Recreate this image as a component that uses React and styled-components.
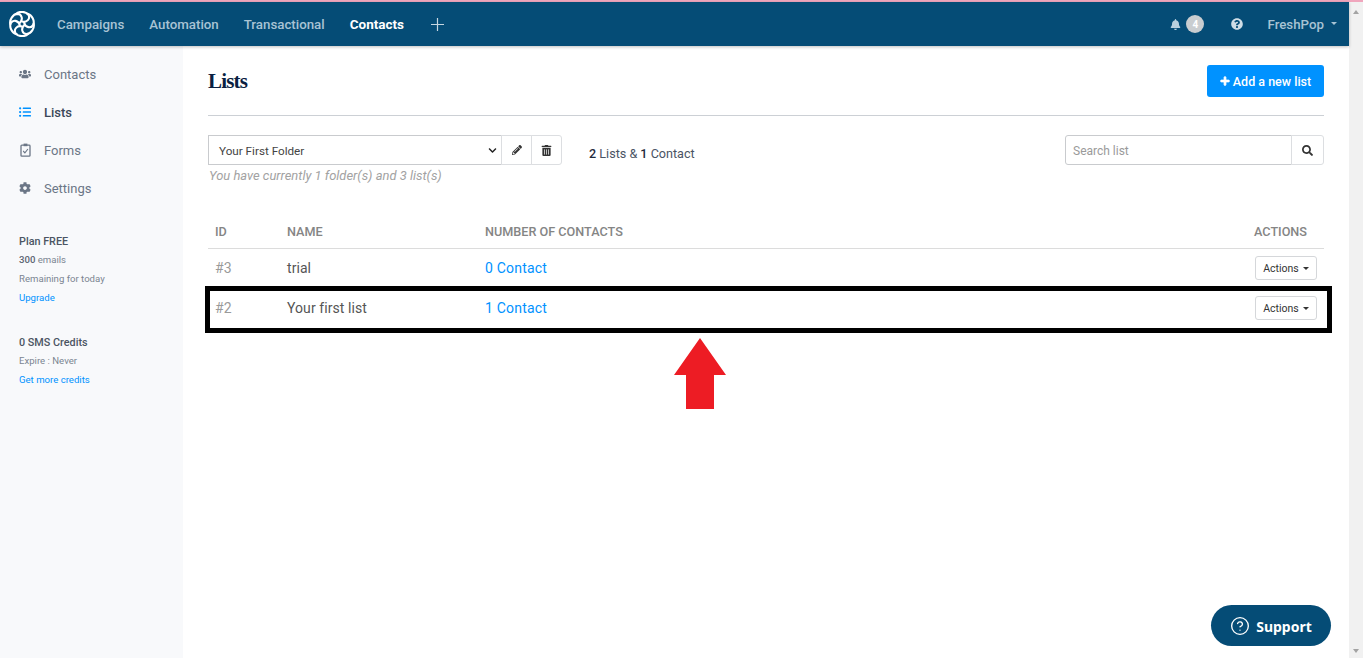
import React from "react";
import styled, { createGlobalStyle } from "styled-components";
import { FaUsers, FaListUl, FaCog, FaBell, FaQuestionCircle, FaPencilAlt, FaTrashAlt, FaSearch, FaPlus, FaChevronDown } from "react-icons/fa";
import { CircleHelp } from "lucide-react";

const Global = createGlobalStyle`
  html, body { margin: 0; padding: 0; height: 100%; overflow: hidden; background: #fff; }
  body { font-family: Roboto, "Liberation Sans", sans-serif; color: #333; }
  * { box-sizing: border-box; }
`;

const Page = styled.div`position: relative; width: 1363px; height: 658px; overflow: hidden; display: flex; flex-direction: column;`;
const PinkStrip = styled.div`height: 2px; background: #f0a6bd; flex: none;`;
const Body = styled.div`flex: 1; display: flex; min-height: 0;`;
const Viewport = styled.div`flex: 1; display: flex; flex-direction: column; min-width: 0;`;
const Scrollbar = styled.div`width: 14px; background: #f1f1f1; display: flex; flex-direction: column; justify-content: space-between; align-items: center; padding: 8px 0 5px;`;
const ScrollArrow = styled.div`
  width: 0; height: 0; border-left: 3.5px solid transparent; border-right: 3.5px solid transparent;
  ${p => p.$down ? "border-top: 4px solid #a3a3a3;" : "border-bottom: 4px solid #a3a3a3;"}
`;

const Header = styled.header`height: 44px; flex: none; background: #054c76; display: flex; align-items: center; padding: 0 12px 0 9px; box-shadow: 0 1px 3px rgba(0,0,0,.25); position: relative; z-index: 1;`;
const Logo = styled.svg`width: 26px; height: 26px; flex: none; margin-right: 22px;`;
const Nav = styled.nav`display: flex; align-items: center; gap: 25px; flex: 1;`;
const NavItem = styled.a`font-size: ${p => p.$active ? "13.5px" : "13.3px"}; font-weight: ${p => p.$active ? 700 : 500}; color: ${p => p.$active ? "#fff" : "#a8c3d4"};`;
const PlusIcon = styled.svg`width: 13px; height: 13px; margin-left: 2px;`;
const HeaderRight = styled.div`display: flex; align-items: center; color: #b9cfdd;`;
const Badge = styled.span`width: 18px; height: 18px; border-radius: 50%; background: #c9cdd0; color: #fff; font-size: 10px; font-weight: 700; display: flex; align-items: center; justify-content: center; margin-left: 5px;`;
const HelpWrap = styled.span`display: flex; margin: 0 24px 0 27px; font-size: 12px; color: #cfdde6;`;
const User = styled.span`font-size: 13.3px; font-weight: 500; color: #a8c3d4; display: flex; align-items: center; gap: 7px;`;
const SmallCaret = styled.span`width: 0; height: 0; border-left: 3px solid transparent; border-right: 3px solid transparent; border-top: 3px solid currentColor; margin-bottom: 2px;`;

const Content = styled.div`flex: 1; display: flex; min-height: 0;`;
const Sidebar = styled.aside`width: 183px; flex: none; background: #f8f9fb; padding: 9px 0 0 19px;`;
const SideItem = styled.div`height: 38px; display: flex; align-items: center; gap: 13px; font-size: 13px; font-weight: ${p => p.$active ? 500 : 400}; color: ${p => p.$active ? "#3b4758" : "#6b7686"};`;
const SideIcon = styled.span`width: 12px; display: flex; justify-content: center; font-size: 12px; color: ${p => p.$active ? "#0092ff" : "#6b7686"};`;
const Info = styled.div`margin-top: ${p => p.$second ? "26px" : "25px"}; display: flex; flex-direction: column;`;
const InfoTitle = styled.div`font-size: 10.8px; font-weight: 500; padding-top: 2px; line-height: 16px; color: #4b5563;`;
const InfoLine = styled.div`font-size: 9.6px; line-height: 19px; color: #7b8592; b { font-weight: 500; color: #5b6572; }`;
const InfoLink = styled.a`font-size: 9.6px; line-height: 19px; color: #0092ff;`;

const Main = styled.main`flex: 1; padding: 19px 25px 0; min-width: 0;`;
const TitleRow = styled.div`height: 51px; display: flex; align-items: flex-start; justify-content: space-between; border-bottom: 1px solid #ccd0d5;`;
const Title = styled.h1`margin: 0; padding-top: 4px; font-family: "Liberation Serif", serif; font-size: 21px; line-height: 24px; font-weight: 700; color: #0b1f42; letter-spacing: -.8px;`;
const PrimaryButton = styled.button`width: 117px; height: 32px; border: 0; border-radius: 3px; background: #0092ff; color: #fff; font: 500 12.5px Roboto, sans-serif; display: flex; align-items: center; justify-content: center; gap: 3px; padding: 0;`;
const ThickPlus = styled(FaPlus)`stroke: currentColor; stroke-width: 40px;`;

const Toolbar = styled.div`display: flex; align-items: flex-start; margin-top: 19px;`;
const FolderBlock = styled.div`width: 354px;`;
const InputGroup = styled.div`display: flex; height: 30px;`;
const FolderSelect = styled.div`flex: 1; border: 1px solid #c9cbce; display: flex; align-items: center; justify-content: space-between; padding: 1px 4px 0 10px; font-size: 11.7px; color: #444;`;
const AddonButton = styled.div`width: ${p => p.$wide ? "33px" : "31px"}; margin-left: -1px; border: 1px solid #dcdee1; display: flex; align-items: center; justify-content: center; font-size: 11px; color: #333; ${p => p.$end && "border-radius: 0 3px 3px 0;"} background: #fff;`;
const Hint = styled.div`font-size: 12.95px; font-style: italic; color: #a2a2a2; margin-top: 3px; padding-left: 1px; line-height: 15px;`;
const Counts = styled.div`margin: 11px 0 0 27px; font-size: 12.6px; line-height: 15px; color: #4a5464; flex: 1; b { font-weight: 500; color: #1f2b3d; }`;
const SearchInput = styled.div`width: 227px; height: 30px; border: 1px solid #c9cbce; border-radius: 3px 0 0 3px; padding: 1px 0 0 7px; display: flex; align-items: center; font-size: 12px; color: #9a9a9a;`;

const Table = styled.table`width: 100%; border-collapse: collapse; margin-top: 32px; table-layout: fixed;`;
const Th = styled.th`height: 33px; padding: 0 ${p => p.$right ? "17px" : "7px"} 0 7px; text-align: ${p => p.$right ? "right" : "left"}; font-size: 12.65px; font-weight: 500; color: #858585; border-bottom: 1px solid #dcdcdc; ${p => p.$w && `width: ${p.$w}px;`}`;
const Td = styled.td`height: 40px; padding: 0 7px; font-size: 14px; color: ${p => p.$muted ? "#9a9a9a" : "#555"}; text-align: ${p => p.$right ? "right" : "left"}; letter-spacing: .07px;`;
const ContactLink = styled.a`color: #0092ff; letter-spacing: .2px;`;
const ActionsButton = styled.button`height: 24px; width: 62px; padding: 0; border: 1px solid #d5d7da; border-radius: 3px; background: #fff; font: 400 10.5px Roboto, sans-serif; color: #333; display: inline-flex; align-items: center; justify-content: center; gap: 4px; vertical-align: middle;`;
const Caret = styled.span`width: 0; height: 0; border-left: 3.5px solid transparent; border-right: 3.5px solid transparent; border-top: 3.5px solid #333;`;

const HighlightBox = styled.div`position: absolute; left: 205px; top: 286px; width: 1127px; height: 47px; border: 5px solid #000; pointer-events: none;`;
const ArrowSvg = styled.svg`position: absolute; left: 674px; top: 338px; width: 52px; height: 71px;`;
const Support = styled.button`position: absolute; left: 1211px; top: 605px; width: 120px; height: 41px; border: 0; border-radius: 21px; background: #054c76; color: #fff; display: flex; align-items: center; justify-content: center; gap: 6px; font: 700 14px "Noto Sans", sans-serif; padding: 1px 0 0;`;

const SwirlLogo = () => (
  <Logo viewBox="-13 -13 26 26" fill="none" stroke="#fff" strokeWidth="2.1" strokeLinecap="round">
    {[0, 60, 120, 180, 240, 300].map(a => (
      <g key={a} transform={`rotate(${a})`}>
        <path d="M-6 -10 C-3 -13 4 -13 6.5 -9 C8.5 -5.5 5 -1 0 -2.5" />
      </g>
    ))}
  </Logo>
);

const ClipboardIcon = () => (
  <svg width="11" height="14" viewBox="0 0 11 14" fill="none" stroke="#6b7686" strokeWidth="1.3">
    <rect x="1" y="2.2" width="9" height="11" rx=".8" />
    <rect x="3.6" y=".6" width="3.8" height="2.6" fill="#6b7686" stroke="none" />
    <path d="M3.2 8 L4.9 9.8 L7.9 6" strokeWidth="1.1" />
  </svg>
);

export default function App() {
  return (
    <Page>
      <Global />
      <PinkStrip />
      <Body>
        <Viewport>
          <Header>
            <SwirlLogo />
            <Nav>
              <NavItem>Campaigns</NavItem>
              <NavItem>Automation</NavItem>
              <NavItem>Transactional</NavItem>
              <NavItem $active>Contacts</NavItem>
              <PlusIcon viewBox="0 0 13 13" stroke="#c6d6e1" strokeWidth="1.2"><path d="M6.5 0V13M0 6.5H13" /></PlusIcon>
            </Nav>
            <HeaderRight>
              <FaBell size={11} />
              <Badge>4</Badge>
              <HelpWrap><FaQuestionCircle /></HelpWrap>
              <User>FreshPop <SmallCaret /></User>
            </HeaderRight>
          </Header>
          <Content>
            <Sidebar>
              <SideItem><SideIcon><FaUsers /></SideIcon>Contacts</SideItem>
              <SideItem $active><SideIcon $active><FaListUl /></SideIcon>Lists</SideItem>
              <SideItem><SideIcon><ClipboardIcon /></SideIcon>Forms</SideItem>
              <SideItem><SideIcon><FaCog /></SideIcon>Settings</SideItem>
              <Info>
                <InfoTitle>Plan FREE</InfoTitle>
                <InfoLine><b>300</b> emails</InfoLine>
                <InfoLine>Remaining for today</InfoLine>
                <InfoLink>Upgrade</InfoLink>
              </Info>
              <Info $second>
                <InfoTitle>0 SMS Credits</InfoTitle>
                <InfoLine>Expire : Never</InfoLine>
                <InfoLink>Get more credits</InfoLink>
              </Info>
            </Sidebar>
            <Main>
              <TitleRow>
                <Title>Lists</Title>
                <PrimaryButton><ThickPlus size={10} /> Add a new list</PrimaryButton>
              </TitleRow>
              <Toolbar>
                <FolderBlock>
                  <InputGroup>
                    <FolderSelect>Your First Folder <FaChevronDown size={9} color="#222" /></FolderSelect>
                    <AddonButton><FaPencilAlt size={10} /></AddonButton>
                    <AddonButton $end><FaTrashAlt /></AddonButton>
                  </InputGroup>
                  <Hint>You have currently 1 folder(s) and 3 list(s)</Hint>
                </FolderBlock>
                <Counts><b>2</b> Lists &amp; <b>1</b> Contact</Counts>
                <InputGroup>
                  <SearchInput>Search list</SearchInput>
                  <AddonButton $end $wide><FaSearch /></AddonButton>
                </InputGroup>
              </Toolbar>
              <Table>
                <thead>
                  <tr>
                    <Th $w={72}>ID</Th>
                    <Th $w={198}>NAME</Th>
                    <Th>NUMBER OF CONTACTS</Th>
                    <Th $w={120} $right>ACTIONS</Th>
                  </tr>
                </thead>
                <tbody>
                  <tr>
                    <Td $muted>#3</Td>
                    <Td>trial</Td>
                    <Td><ContactLink>0 Contact</ContactLink></Td>
                    <Td $right><ActionsButton>Actions <Caret /></ActionsButton></Td>
                  </tr>
                  <tr>
                    <Td $muted>#2</Td>
                    <Td>Your first list</Td>
                    <Td><ContactLink>1 Contact</ContactLink></Td>
                    <Td $right><ActionsButton>Actions <Caret /></ActionsButton></Td>
                  </tr>
                </tbody>
              </Table>
            </Main>
          </Content>
        </Viewport>
        <Scrollbar>
          <ScrollArrow />
          <ScrollArrow $down />
        </Scrollbar>
      </Body>
      <HighlightBox />
      <ArrowSvg viewBox="0 0 52 71">
        <path d="M26 0 L52 37 L40 37 L40 71 L12 71 L12 37 L0 37 Z" fill="#ed1c24" />
      </ArrowSvg>
      <Support><CircleHelp size={20} strokeWidth={1.6} /> Support</Support>
    </Page>
  );
}
